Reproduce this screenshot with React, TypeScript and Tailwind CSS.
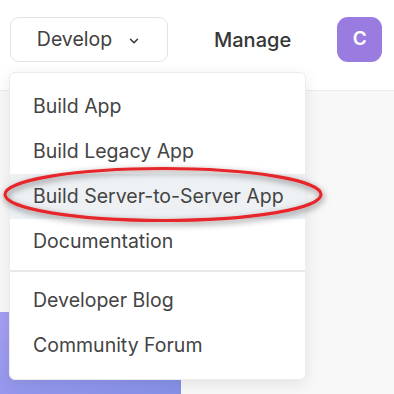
import { ChevronDown } from "lucide-react";

const groups = [
  ["Build App", "Build Legacy App", "Build Server-to-Server App", "Documentation"],
  ["Developer Blog", "Community Forum"],
];

export default function App() {
  return (
    <div className="relative h-[394px] w-[394px] overflow-hidden bg-[#f8f8f8] font-['Inter',sans-serif] text-[#444]">
      <header className="flex h-[91px] items-start border-b border-[#ececec] bg-white pl-[10px] pt-[17px]">
        <button
          type="button"
          className="flex h-[45px] w-[158px] items-center justify-center gap-[15px] rounded-[9px] border border-[#e3e2ea] bg-white text-[19.5px] text-[#404040]"
        >
          Develop
          <ChevronDown size={14} strokeWidth={2.5} className="mt-[2px] text-[#333]" />
        </button>
        <span className="ml-[46px] flex h-[45px] items-center text-[20px] font-medium text-[#363636]">Manage</span>
        <span className="ml-[46px] flex h-[45px] w-[45px] items-center justify-center rounded-[11px] bg-[#9a7be0] text-[19px] font-semibold text-white">
          C
        </span>
      </header>

      <main className="pt-[221px]">
        <div className="h-[82px] w-[181px] bg-gradient-to-br from-[#a69ff3] to-[#8591e8]" />
      </main>

      <div className="absolute left-[9px] top-[72px] w-[297px] rounded-[6px] border border-[#ececec] bg-white py-[11px] shadow-[0_4px_16px_rgba(0,0,0,0.09)]">
        {groups.map((items, g) => (
          <div key={g} className={g > 0 ? "mt-[6px] border-t-2 border-[#e8e8e8] pt-[6px]" : ""}>
            {items.map((item) => (
              <div
                key={item}
                className={`flex h-[45px] items-center pl-[23px] text-[19.5px] ${
                  item === "Build Server-to-Server App" ? "bg-[#edf1f4]" : ""
                }`}
              >
                {item}
              </div>
            ))}
          </div>
        ))}
      </div>

      <svg className="pointer-events-none absolute left-0 top-0" width="394" height="394">
        <defs>
          <filter id="sh" x="-10%" y="-50%" width="120%" height="200%">
            <feDropShadow dx="1" dy="2.5" stdDeviation="3" floodColor="#000" floodOpacity="0.5" />
          </filter>
        </defs>
        <ellipse cx="163" cy="194.5" rx="158" ry="26" fill="none" stroke="#e5262c" strokeWidth="3.2" filter="url(#sh)" />
      </svg>
    </div>
  );
}
